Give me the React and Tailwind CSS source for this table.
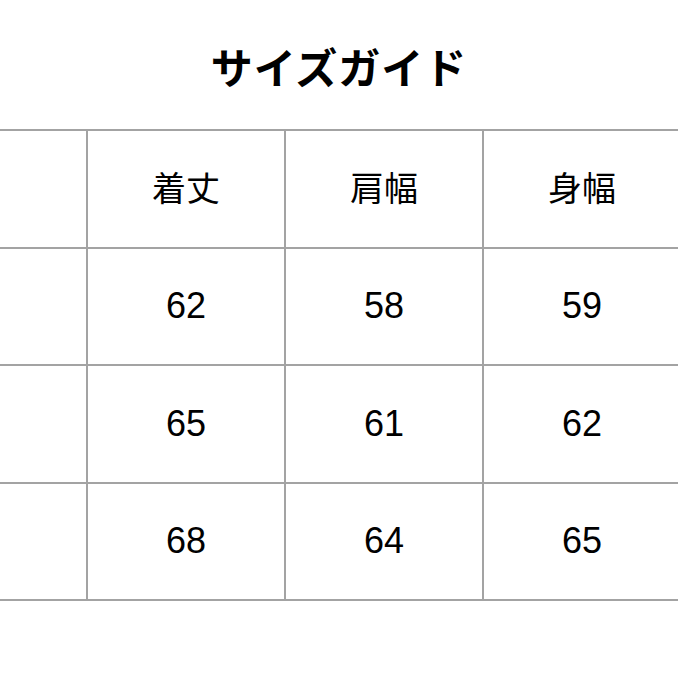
import React from 'react'

const HEADERS = ['', '着丈', '肩幅', '身幅']
const ROWS = [
  ['', '62', '58', '59'],
  ['', '65', '61', '62'],
  ['', '68', '64', '65'],
]

export default function App() {
  return (
    <div className="w-[678px] h-[678px] bg-white overflow-hidden text-black font-['Liberation_Sans','Noto_Sans_CJK_JP',sans-serif]">
      {/* タイトル */}
      <div className="h-[129px] pt-[10px] flex items-center justify-center">
        <h1 className="text-[42px] font-bold leading-none tracking-[1px]">サイズガイド</h1>
      </div>

      {/* 表 */}
      <div className="ml-[-112px] w-max grid grid-cols-[repeat(4,198px)] border-t-2 border-l-2 border-[#a3a3a3]">
        {HEADERS.map((h, i) => (
          <div
            key={`h${i}`}
            className="h-[117.5px] border-r-2 border-b-2 border-[#a3a3a3] flex items-center justify-center text-[34px] leading-none"
          >
            {h}
          </div>
        ))}
        {ROWS.flatMap((row, r) =>
          row.map((v, c) => (
            <div
              key={`${r}-${c}`}
              className="h-[117.5px] border-r-2 border-b-2 border-[#a3a3a3] flex items-center justify-center text-[36px] leading-none"
            >
              {v}
            </div>
          ))
        )}
      </div>
    </div>
  )
}
